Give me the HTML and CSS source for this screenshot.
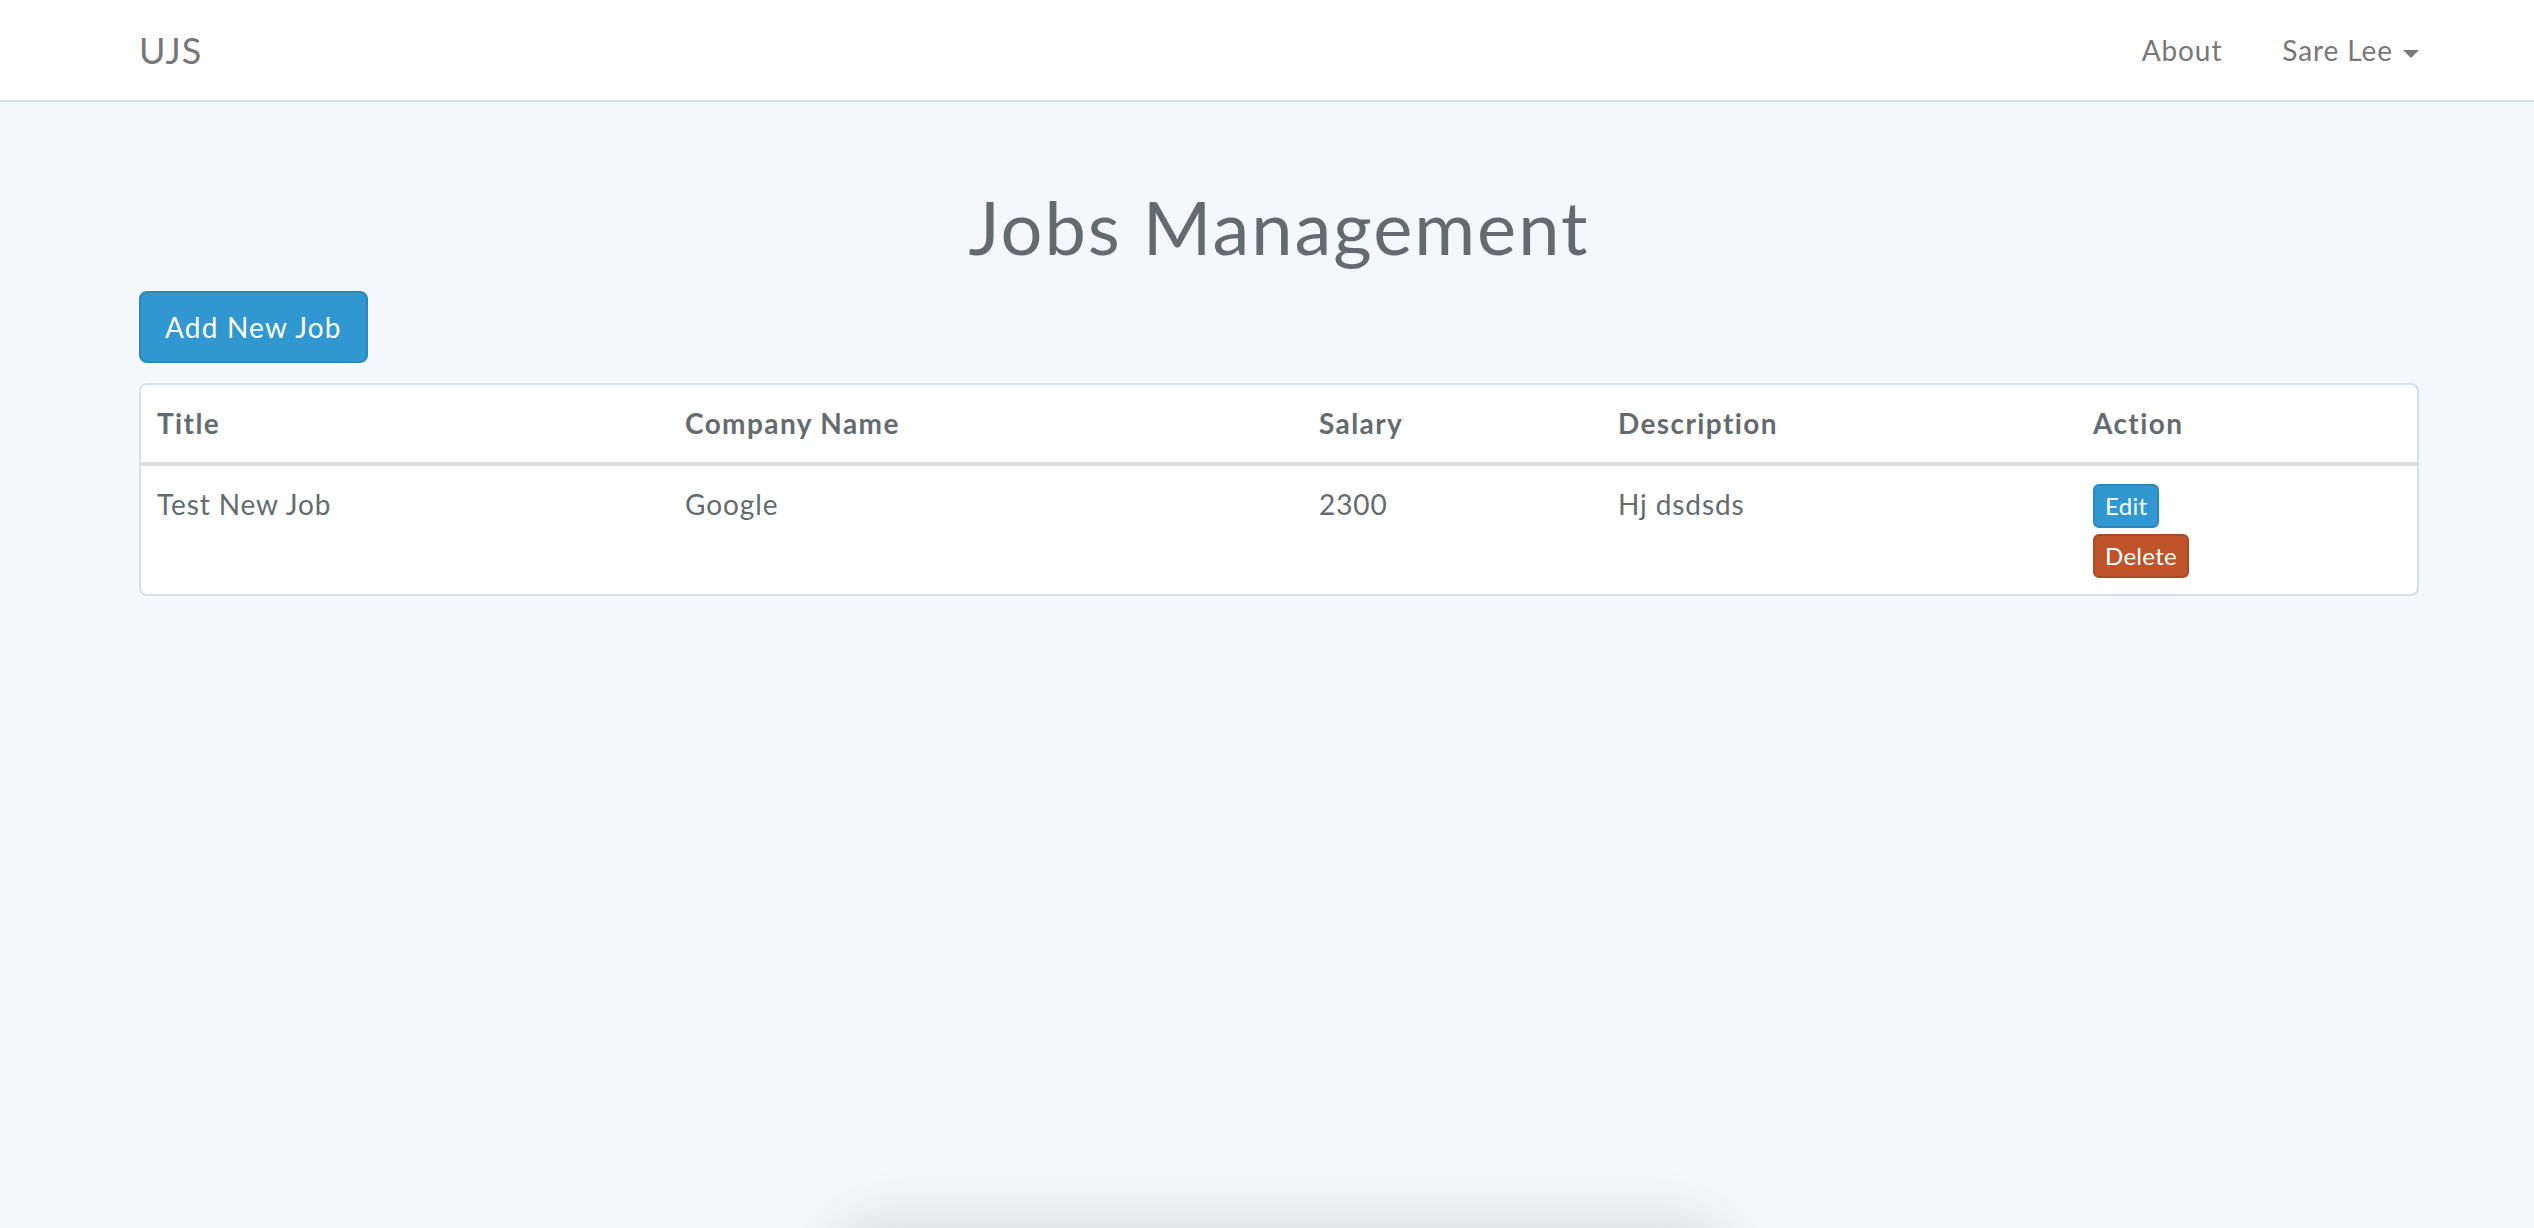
FILE: index.html
```html
<!DOCTYPE html>
<html lang="en">
<head>
<meta charset="utf-8">
<title>UJS - Jobs Management</title>
<link rel="stylesheet" href="styles.css">
</head>
<body>
<nav class="navbar">
  <div class="container nav-inner">
    <a class="brand" href="#">UJS</a>
    <ul class="nav-right">
      <li><a class="nav-link" href="#">About</a></li>
      <li><a class="nav-link" href="#">Sare Lee <span class="caret"></span></a></li>
    </ul>
  </div>
</nav>
<main class="container content">
  <h1 class="page-title">Jobs Management</h1>
  <a class="btn btn-primary btn-add" href="#">Add New Job</a>
  <div class="table-panel">
    <table class="jobs-table">
      <colgroup>
        <col class="c-title"><col class="c-company"><col class="c-salary"><col class="c-desc"><col class="c-action">
      </colgroup>
      <thead>
        <tr><th>Title</th><th>Company Name</th><th>Salary</th><th>Description</th><th>Action</th></tr>
      </thead>
      <tbody>
        <tr>
          <td>Test New Job</td>
          <td>Google</td>
          <td>2300</td>
          <td>Hj dsdsds</td>
          <td class="actions">
            <a class="btn btn-xs btn-primary" href="#">Edit</a>
            <form class="del-form"><button type="button" class="btn btn-xs btn-danger">Delete</button></form>
          </td>
        </tr>
      </tbody>
    </table>
  </div>
</main>
<div class="shadow-peek"></div>
</body>
</html>
```

FILE: styles.css
```css
* { box-sizing: border-box; }
html, body { margin: 0; padding: 0; }
body {
  background: #f5f8fa;
  font-family: "Lato", "Open Sans", sans-serif;
  font-weight: 400;
  font-size: 28px;
  line-height: 1.6;
  letter-spacing: 0.9px;
  color: #636b6f;
  overflow: hidden;
  height: 1228px;
}
a { text-decoration: none; }

.container {
  width: 2280px;
  margin-left: 139px;
}
.content { display: flow-root; }

.navbar {
  background: #fff;
  border-bottom: 2px solid #d3e0e9;
  height: 102px;
  margin-bottom: 44px;
}
.nav-inner {
  height: 100px;
  display: flex;
  align-items: center;
  justify-content: space-between;
}
.brand {
  font-size: 36px;
  color: #777;
  line-height: 40px;
  letter-spacing: 1px;
}
.nav-right {
  list-style: none;
  margin: 0 -30px 0 0;
  padding: 0;
  display: flex;
}
.nav-link {
  display: block;
  padding: 0 30px;
  color: #777;
  font-size: 28px;
  line-height: 100px;
}
.caret {
  display: inline-block;
  width: 0;
  height: 0;
  margin-left: 2px;
  vertical-align: middle;
  border-top: 8px solid #777;
  border-left: 8px solid transparent;
  border-right: 8px solid transparent;
}

.page-title {
  margin: 40px 0 24px;
  text-align: center;
  font-size: 74px;
  font-weight: 400;
  line-height: 1.1;
  letter-spacing: 2px;
  color: #636b6f;
}

.btn {
  display: inline-block;
  border: 2px solid transparent;
  border-radius: 8px;
  font-family: inherit;
  letter-spacing: inherit;
  color: #fff;
  cursor: pointer;
  text-align: center;
}
.btn-primary { background: #3097d1; border-color: #2a88bd; }
.btn-danger { background: #bf5329; border-color: #aa4a24; }
.btn-add {
  padding: 12px 24px;
  font-size: 28px;
  line-height: 44px;
  letter-spacing: 1.2px;
}
.btn-xs {
  padding: 2px 10px;
  font-size: 24px;
  line-height: 36px;
  border-radius: 6px;
  letter-spacing: 0.3px;
}

.table-panel {
  margin-top: 20px;
  background: #fff;
  border: 2px solid #d3e0e9;
  border-radius: 8px;
  overflow: hidden;
}
.jobs-table {
  width: 100%;
  border-collapse: collapse;
  table-layout: fixed;
}
.c-title { width: 528px; }
.c-company { width: 634px; }
.c-salary { width: 299px; }
.c-desc { width: 475px; }
.c-action { width: auto; }
.jobs-table th, .jobs-table td {
  padding: 16px;
  text-align: left;
  vertical-align: top;
  line-height: 44.8px;
}
.jobs-table th {
  font-weight: 700;
  letter-spacing: 1.4px;
  border-bottom: 4px solid #ddd;
}
.actions .btn { display: inline-block; }
.del-form { margin: 4px 0 0; }

.shadow-peek {
  position: fixed;
  left: 840px;
  width: 880px;
  top: 1232px;
  height: 200px;
  border-radius: 40px;
  background: #fff;
  box-shadow: 0 0 60px 10px rgba(0, 0, 0, 0.12);
}
```
